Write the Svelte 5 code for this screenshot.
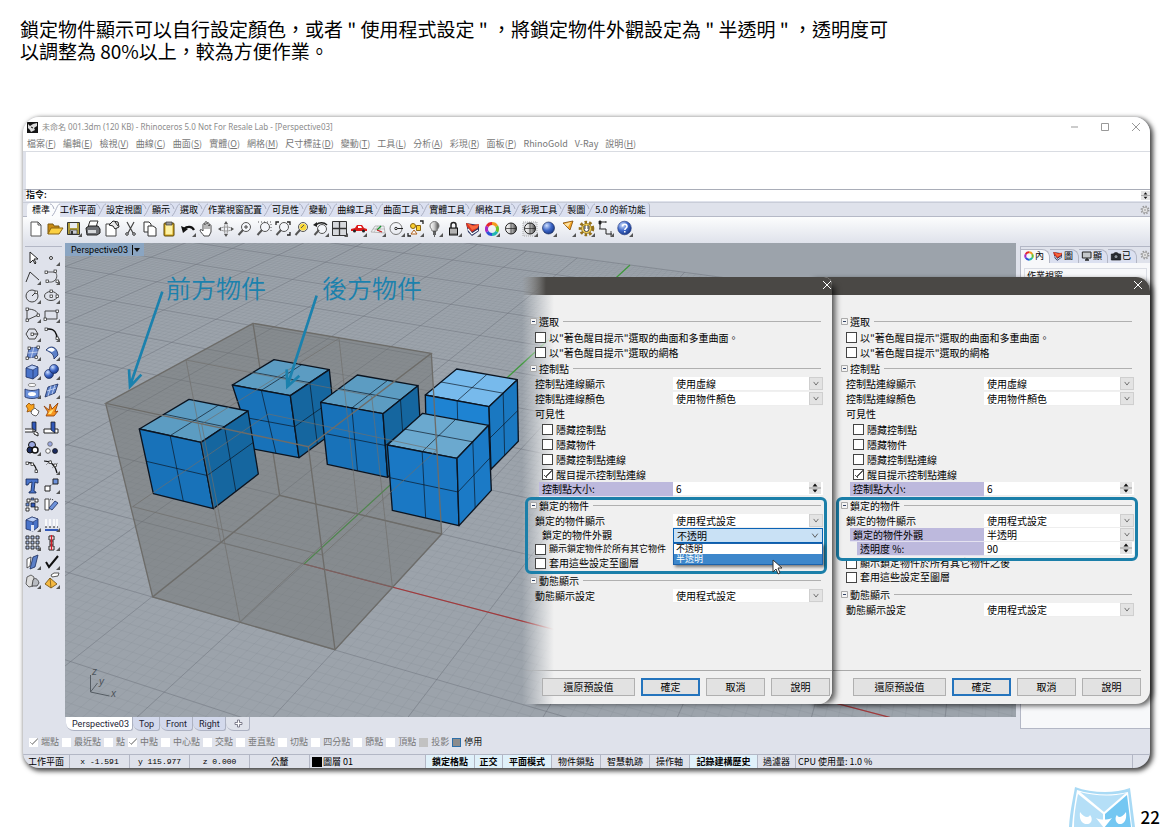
<script lang="ts">
    type Row = {
        kind: 'check' | 'select' | 'spin' | 'text';
        label: string;
        value?: string;
        indent?: number;
        checked?: boolean;
        tinted?: boolean;
        open?: boolean;
        cut?: boolean;
    };
    type Section = { title: string; mark?: string; rows: Row[] };

    const menus = [
        ['檔案', 'F'], ['編輯', 'E'], ['檢視', 'V'], ['曲線', 'C'], ['曲面', 'S'], ['實體', 'O'],
        ['網格', 'M'], ['尺寸標註', 'D'], ['變動', 'T'], ['工具', 'L'], ['分析', 'A'], ['彩現', 'R'],
        ['面板', 'P'], ['RhinoGold', ''], ['V-Ray', ''], ['說明', 'H']
    ];

    const tabs = [
        '標準', '工作平面', '設定視圖', '顯示', '選取', '作業視窗配置', '可見性', '變動', '曲線工具',
        '曲面工具', '實體工具', '網格工具', '彩現工具', '製圖', '5.0 的新功能'
    ];

    const fly = '<path d="M17 13v4h-4z" fill="#555"/>';
    const node = (x: number, y: number) =>
        `<rect x="${x - 1}" y="${y - 1}" width="2.500" height="2.500" fill="#fff" stroke="#222" stroke-width=".7"/>`;
    const lens = '<circle cx="10" cy="7" r="4.500" fill="#f4f6fa" stroke="#555"/><path d="M7 10l-4.500 5" stroke="#555" stroke-width="2"/>';
    const ring =
        '<g fill="none" stroke-width="3"><path d="M9 3.500a5.500 5.500 0 0 1 4.800 2.700" stroke="#f39a1d"/><path d="M13.800 6.200a5.500 5.500 0 0 1 0 5.500" stroke="#6cc22c"/><path d="M13.800 11.700A5.500 5.500 0 0 1 9 14.500" stroke="#21b6b0"/><path d="M9 14.500a5.500 5.500 0 0 1-4.800-2.800" stroke="#2c50d8"/><path d="M4.200 11.700a5.500 5.500 0 0 1 0-5.500" stroke="#a52bc4"/><path d="M4.200 6.200A5.500 5.500 0 0 1 9 3.500" stroke="#e4262c"/></g>';
    const wedge =
        '<path d="M2 3l2 9 4 4 7-5V5z" fill="#27325e"/><path d="M2 3l7 2 6-1-1 4-6 4-5-5z" fill="#dd3420"/><path d="M3 3l6 3 6-1-2 3-5 2z" fill="#f7693f"/><path d="M4 9l4 5 6-4" stroke="#fff" stroke-width="1.300" fill="none"/>';
    const sphere = '<circle cx="9" cy="8.500" r="5.500" fill="url(#grayBall)" stroke="#222"/><path d="M9 3v11M3.500 8.500h11" stroke="#222" stroke-width=".7"/>';

    const toolbar: [string, string][] = [
        ['新增', '<path d="M4 2h7l3 3v11H4z" fill="#fff" stroke="#555"/><path d="M11 2v3h3" fill="none" stroke="#555"/>'],
        ['開啟', '<path d="M2 14V4h5l1 2h5v3" fill="#c98b12" stroke="#7d5a10"/><path d="M2 14l3-6h12l-4 6z" fill="#fbd042" stroke="#8b6512"/>'],
        ['儲存', '<path d="M2.500 2.500h12v12h-12z" fill="#b09d3a" stroke="#333"/><path d="M5 3h7v5H5z" fill="#e9ebf0"/><path d="M5 10h7v4H5z" fill="#c9ccd4" stroke="#333" stroke-width=".6"/><path d="M6 11h2v3H6z" fill="#333"/>' + fly],
        ['列印', '<path d="M6 1h8l-2 6H4z" fill="#fff" stroke="#333"/><path d="M2 8l3-2h9l2 3v4l-3 2H3z" fill="#6d6f74" stroke="#222"/><path d="M4 10h8v3H4z" fill="#d6d8db"/>'],
        ['文件屬性', '<path d="M3 4h10v12H3z" fill="#fff" stroke="#444"/><path d="M10 1l5 1 1 5-4 2-2-3-4-1z" fill="#e8e8e8" stroke="#222"/><path d="M12 2l3 4" stroke="#222"/>'],
        ['剪下', '<path d="M5 2l6 11M12 2L6 13" stroke="#444" stroke-width="1.200"/><circle cx="5" cy="14" r="1.300" fill="none" stroke="#333"/><circle cx="12" cy="14" r="1.300" fill="none" stroke="#333"/>'],
        ['複製', '<path d="M3 2h5l2 2v8H3z" fill="#fff" stroke="#333"/><path d="M7 6h5l3 2v8H7z" fill="#fff" stroke="#333"/>'],
        ['貼上', '<rect x="4" y="3" width="10" height="13" rx="1" fill="#d3a416" stroke="#5b480c"/><path d="M5.500 5h7v9.500h-7z" fill="#fdf2a6"/><path d="M6 2h6v3H6z" fill="#999" stroke="#333" stroke-width=".7"/>'],
        ['復原', '<path d="M5 9c3-3 8-3 10 1" stroke="#111" stroke-width="2.200" fill="none"/><path d="M2 6l2 7 5-4z" fill="#111"/>' + fly],
        ['平移', '<path d="M6 16c-1-2-4-4-4-6 1-1 2 0 3 1V5c0-2 2-2 2 0V3c0-2 2-2 2 0v1c0-2 2-2 2 0v2c0-2 2-2 2 0v6l-2 4z" fill="#fff" stroke="#333" stroke-width=".9"/><path d="M7 5v4M9 4v5M11 5v4" stroke="#333" stroke-width=".7"/>'],
        ['旋轉檢視', '<ellipse cx="9" cy="9" rx="6" ry="2" fill="none" stroke="#999"/><ellipse cx="9" cy="9" rx="1.600" ry="6" fill="none" stroke="#999"/><path d="M4 7v4L1 9zM14 7v4l3-2zM7 4h4L9 1zM7 14h4l-2 3z" fill="#555"/>'],
        ['動態縮放', lens + '<path d="M8 7h4M10 5v4" stroke="#444"/>'],
        ['框選縮放', lens + '<path d="M3 2h13v11" fill="none" stroke="#555" stroke-dasharray="1 2"/>'],
        ['縮放至範圍', lens + '<path d="M2 5V2h3M13 2h3v3M16 12v3h-3" fill="none" stroke="#222" stroke-width="1.300"/>'],
        ['縮放至選取', lens + '<circle cx="10" cy="7" r="3.500" fill="#f9d838"/><path d="M8 8l3-3" stroke="#555"/>'],
        ['復原檢視', lens.replace('cy="7"', 'cy="9"') + '<path d="M4 5c3-3 8-3 11 0" fill="none" stroke="#222" stroke-width="1.500"/><path d="M1 5l4-3v5z" fill="#222"/>' + fly],
        ['四個作業視窗', '<path d="M1.500 1.500h14v14h-14z" fill="#d6d8dc" stroke="#333"/><path d="M8.500 1.500v14M1.500 8.500h14" stroke="#333" stroke-width="1.300"/>' + fly],
        ['正確比例', '<path d="M1 9l4-1 2-3h5l2 3 3 1v2H1z" fill="#dc1a1a"/><path d="M8 6h3l1 2H8z" fill="#fff"/><circle cx="4.500" cy="11" r="1.500" fill="#222"/><circle cx="13.500" cy="11" r="1.500" fill="#222"/>' + fly],
        ['工作平面', '<path d="M2 12l4-6h9l1 7z" fill="#eef0f2" stroke="#aaa" stroke-width=".8"/><path d="M4 9h12M5 12l4-6M10 13l2-7" stroke="#aaa" stroke-width=".6"/><path d="M8 10l4-4" stroke="#14962f" stroke-width="1.300"/><path d="M8 10l5 2" stroke="#c92020" stroke-width="1.300"/>' + fly],
        ['物件鎖點', '<circle cx="8" cy="8.500" r="6" fill="none" stroke="#777"/><path d="M8 8.500h7" stroke="#222"/><circle cx="8" cy="8.500" r="1.200" fill="#fff" stroke="#222"/>' + fly],
        ['選取', '<circle cx="6" cy="6" r="2.500" fill="#fbd030" stroke="#8b6512"/><path d="M9.500 5.500h4v5h-4z" fill="#fbd030" stroke="#8b6512"/><path d="M7 10l3 4H4z" fill="#fff" stroke="#b0611a"/><path d="M13 1h3v3M1 13v3h3" fill="none" stroke="#222" stroke-width="1.300"/>' + fly],
        ['隱藏', '<path d="M6 11c0-2-2-3-2-5a4 4 0 0 1 9 0c0 2-2 3-2 5z" fill="url(#grayBall)" stroke="#777"/><path d="M7 12h3M7 14h3M8 16h1" stroke="#333" stroke-width="1.300"/>' + fly],
        ['鎖定', '<path d="M6 8V5a2.500 2.500 0 0 1 5 0v3" fill="none" stroke="#222" stroke-width="1.500"/><rect x="4.500" y="8" width="8" height="7" fill="#888" stroke="#111"/><path d="M5 10h7M5 12h7" stroke="#ddd"/>' + fly],
        ['圖層', wedge + fly],
        ['物件屬性', ring + fly],
        ['著色', sphere],
        ['彩現著色', '<path d="M2 2h14v14H2z" fill="#dfe1e5" stroke="#aaa" stroke-dasharray="1 1"/>' + sphere + fly],
        ['彩現', '<circle cx="8.500" cy="8" r="6" fill="url(#blueBall)" stroke="#0a1d4d" stroke-width=".6"/>' + fly],
        ['聚光燈', '<path d="M4 3l10-2-3 9z" fill="#f5a524" stroke="#7d4a08" stroke-width=".8"/><path d="M5 4l7-2-3 5z" fill="#fde3a4"/>' + fly],
        ['選項', '<circle cx="8.500" cy="8.500" r="6.300" fill="none" stroke="#94701b" stroke-width="3" stroke-dasharray="2.500 2"/><circle cx="8.500" cy="8.500" r="5" fill="#f3cf58" stroke="#7c6316" stroke-width=".7"/><path d="M6 6v3a2.500 2.500 0 0 0 5 0V6M7 5v4M10 5v4" fill="#fff" stroke="#444"/>' + fly],
        ['尺寸標註', '<path d="M3 2v7M3 2h6M4 9h5v5h6" fill="none" stroke="#222"/><path d="M2 1h2v3H2zM9 1v2M3 8v2M14 11v5" fill="#222" stroke="#222" stroke-width=".8"/>' + fly],
        ['說明', '<circle cx="8.500" cy="8" r="6.800" fill="url(#blueBall)" stroke="#20357c" stroke-width=".6"/><path d="M6.500 6.500c0-3 4.500-3 4.500 0 0 1.700-2.200 1.700-2.200 3.500M8.800 11v1.500" fill="none" stroke="#fff" stroke-width="1.500"/>' + fly]
    ];

    const cube = '<path d="M2 5l6-3 6 2v8l-5 4-7-2z" fill="#4a74c9" stroke="#1b2c5e" stroke-width=".8"/><path d="M2 5l6-3 6 2-5 3z" fill="#b9cff8" stroke="#1b2c5e" stroke-width=".6"/><path d="M9 7v9" stroke="#1b2c5e" stroke-width=".7"/>';

    const palette: [string, string][] = [
        ['選取物件', '<path d="M6 3v11l3-3 2 4 1-1-2-4h4z" fill="#fff" stroke="#222"/>'],
        ['點', '<circle cx="8" cy="9" r="1.500" fill="#fff" stroke="#333"/>' + fly],
        ['多重直線', '<path d="M2 14l4-10 9 8" fill="none" stroke="#333"/>' + fly],
        ['控制點曲線', '<path d="M3 4h9c3 3 2 7-1 9-3 2-7 1-7-1" fill="none" stroke="#333" stroke-width=".8"/>' + node(3, 4) + node(12, 3) + node(4, 13) + node(14, 13) + fly],
        ['圓', '<circle cx="8" cy="9" r="6" fill="none" stroke="#444"/><path d="M8 9l4-4" stroke="#333"/>' + node(12, 5) + fly],
        ['橢圓', '<ellipse cx="8" cy="9" rx="6.500" ry="4.500" fill="none" stroke="#444"/>' + node(8, 9) + node(8, 4) + node(14, 9) + fly],
        ['圓弧', '<path d="M14 9L3 14V3c6 0 11 2 11 6z" fill="none" stroke="#444"/>' + node(3, 3) + node(3, 14) + node(14, 9) + fly],
        ['矩形', '<path d="M2 5h12v8H2z" fill="none" stroke="#444"/>' + node(2, 13) + node(14, 5) + fly],
        ['多邊形', '<path d="M5 4h6l3 5-3 5H5L2 9z" fill="none" stroke="#444"/><path d="M8 9h6" stroke="#333"/>' + node(8, 9) + fly],
        ['曲線圓角', '<path d="M2 4h4c5 0 8 4 8 10" fill="none" stroke="#111" stroke-width="1.600"/>' + node(3, 4) + node(14, 13) + fly],
        ['曲面', '<path d="M5 4l10-1-3 10-9 1z" fill="#6a8bd0" stroke="#1b2c5e" stroke-width=".7"/><path d="M10 3l-3 11M4 9l10-1" stroke="#dfe7f9" stroke-width=".7"/>' + node(5, 4) + node(14, 3) + node(3, 14) + node(12, 13) + fly],
        ['邊緣曲面', '<path d="M3 6c4-5 11-4 12 5l-4 4c0-5-4-7-8-9z" fill="#5c80c8" stroke="#1b2c5e" stroke-width=".8"/><path d="M4 6c3-3 6-3 8 0l-3 2z" fill="#fff"/>' + fly],
        ['立方體', cube + fly],
        ['球體', '<circle cx="6" cy="11" r="4.500" fill="url(#blueBall)" stroke="#1b2c5e" stroke-width=".7"/><circle cx="11" cy="6" r="4.500" fill="url(#blueBall)" stroke="#1b2c5e" stroke-width=".7"/>' + fly],
        ['投影曲線', '<ellipse cx="8" cy="3" rx="4" ry="1.600" fill="#fff" stroke="#777" stroke-width=".8"/><path d="M1 7c4 2 10 2 14 0v8c-4 2-10 2-14 0z" fill="#6d92db" stroke="#1b2c5e" stroke-width=".8"/><ellipse cx="8" cy="12" rx="4" ry="2" fill="#fff"/>' + fly],
        ['網格', '<path d="M5 5l10-3-3 9-10 4z" fill="#5c80c8" stroke="#1b2c5e" stroke-width=".8"/><path d="M8 4L5 14M12 3L9 12M4 9l9-3" stroke="#cfdcf8" stroke-width=".8"/>' + fly],
        ['組合', '<path d="M2 5l3-3 2 2 3-1v4l2 2-3 3-3-2-3 1 1-3z" fill="#f7a31f" stroke="#8b4b08" stroke-width=".8"/><path d="M8 9l3-2 2 2 2 1-1 3-2 2-3-1-2-2z" fill="#fff" stroke="#666"/>'],
        ['炸開', '<path d="M1 5l5 4 1-6 2 5 6-6-3 9 3-1-4 5H3l2-4z" fill="#f7941f" stroke="#8b3b08" stroke-width=".8"/><path d="M5 13l2-3 4-2-3 5z" fill="#ffe477"/>'],
        ['修剪', '<path d="M1 9h8v3H1" fill="#fff" stroke="#222"/><path d="M8 2h4v9l-4-3z" fill="#3158b8" stroke="#111" stroke-width=".7"/><path d="M10 11l4 2v3l-4-2z" fill="#fff" stroke="#222"/>'],
        ['分割', '<path d="M1 9h14v4H1z" fill="#fff" stroke="#222"/><path d="M8 2h4v11l-4-3z" fill="#3158b8" stroke="#111" stroke-width=".7"/>'],
        ['群組', '<circle cx="8" cy="6" r="3.500" fill="#9aa8e0" stroke="#111"/><circle cx="6" cy="11" r="3" fill="#1c2c60" stroke="#111"/><circle cx="11" cy="11" r="3" fill="#fff" stroke="#111" stroke-width="1.500"/>' + fly],
        ['解散群組', '<circle cx="7" cy="5" r="2.300" fill="#9aa8e0" stroke="#555" stroke-width=".7"/><circle cx="5" cy="12" r="2.300" fill="#fff" stroke="#333" stroke-width=".7"/><circle cx="12" cy="12" r="2.500" fill="#1c2c60" stroke="#111" stroke-width=".7"/>'],
        ['編輯點', '<path d="M2 5c7-2 10 3 11 10" fill="none" stroke="#111" stroke-width="1.200"/>' + node(3, 5) + node(8, 6) + node(12, 13)],
        ['控制點', '<path d="M1 3c6 0 11 3 13 12" fill="none" stroke="#111" stroke-width="1.200"/><path d="M3 7l5-5M9 10l6-5" stroke="#777" stroke-width=".7"/>' + node(7, 4) + node(12, 7) + fly],
        ['文字', '<path d="M2 2h12v4h-1l-2-1-1 9 2 1v1H5v-1l2-1 1-9-3 1-1 2H2z" fill="#4a74c9" stroke="#12234f" stroke-width=".8"/>'],
        ['移動', '<path d="M2 9h5v5H2z" fill="#fff" stroke="#222"/><path d="M10 2h5v5h-5z" fill="#6d92db" stroke="#222"/><path d="M7 9l3-2" stroke="#222" stroke-dasharray="1 1"/>' + fly],
        ['複製物件', '<path d="M3 3h3v3H3zM11 3h3v3h-3zM2 12h3v3H2zM11 11h3v3h-3z" fill="#fff" stroke="#222" stroke-width=".9"/><path d="M7 7h4v4H7z" fill="#3158b8" stroke="#111" stroke-width=".7"/><path d="M2 7h3v3H2zM7 2h3v2H7z" fill="#6d92db" stroke="#222" stroke-width=".7"/>'],
        ['旋轉', '<path d="M2 3h4v11H2z" fill="#fff" stroke="#333" stroke-width=".9"/><path d="M12 5l3 2-6 7-3-2z" fill="#6d92db" stroke="#1b2c5e" stroke-width=".8"/><path d="M7 3l4 1" stroke="#222" stroke-dasharray="1 1"/>'],
        ['布林運算', cube + '<path d="M7 10h3v6H7z" fill="#dfe5f5"/>' + fly],
        ['對齊', '<path d="M2 15h13" stroke="#3158b8" stroke-width="2"/><path d="M3 4v8M7 4v8M11 4v8M14 4v8" stroke="#fff" stroke-width="1.500"/><path d="M2 12h13" stroke="#222" stroke-dasharray="2 2"/>' + fly],
        ['陣列', '<path d="M2 2h3v3H2zM7 2h3v3H7zM12 2h3v3h-3zM2 7h3v3H2zM7 7h3v3H7zM12 7h3v3h-3zM2 12h3v3H2zM7 12h3v3H7zM12 12h3v3h-3z" fill="#b3c5ec" stroke="#222" stroke-width=".9"/>' + fly],
        ['鏡射', '<path d="M6 2h5v4H6zM6 12h5v4H6zM7 7h3v4H7z" fill="#fff" stroke="#222"/><path d="M8.500 1v15" stroke="#d51e28" stroke-width="1.500"/>' + fly],
        ['彎曲', '<path d="M3 6l4-2-1 9-3 2z" fill="#fff" stroke="#333" stroke-width=".8"/><path d="M9 4l5-2-3 12-5 2z" fill="#5c80c8" stroke="#1b2c5e" stroke-width=".8"/>' + fly],
        ['檢查', '<path d="M3 9l3 5 9-11" fill="none" stroke="#111" stroke-width="2"/>' + fly],
        ['實體倒角', '<path d="M2 12l1-7 4-2 3 2-1 9-4 1z" fill="#ddd" stroke="#444" stroke-width=".8"/><path d="M8 14l1-6c2-3 5-1 6 3l-2 3z" fill="#b9bcc2" stroke="#333" stroke-width=".8"/>' + fly],
        ['操作軸', '<path d="M2 12l5-6 7 6-6 4z" fill="#f5b942" stroke="#6b4a0c" stroke-width=".8"/><path d="M7 6l1 10" stroke="#6b4a0c" stroke-width=".7"/><path d="M8 3l3-2h5l-1 3-6 1z" fill="#fff" stroke="#333" stroke-width=".8"/>' + fly]
    ];

    const monitor = '<path d="M2 3h13v9H2z" fill="#c5c8cc" stroke="#222" stroke-width="1.500"/><path d="M6 15h6M9 12v3" stroke="#222" stroke-width="2"/>';
    const camera = '<path d="M2 6h3l2-2h4l2 2h3v9H2z" fill="#2b2f36" stroke="#111"/><circle cx="9" cy="10" r="3" fill="#8c939c" stroke="#111"/>';
    const gear = '<circle cx="9" cy="9" r="6.500" fill="none" stroke="#999" stroke-width="3" stroke-dasharray="2.500 2.600"/><circle cx="9" cy="9" r="5" fill="#f4f4f4" stroke="#8e8e8e" stroke-width="1.300"/><circle cx="9" cy="9" r="1.800" fill="#fff" stroke="#8e8e8e" stroke-width="1.300"/>';
    const panelTabs = [['內', ring], ['圖', wedge], ['顯', monitor], ['已', camera]];

    const osnaps = ['端點', '最近點', '點', '中點', '中心點', '交點', '垂直點', '切點', '四分點', '節點', '頂點', '投影', '停用'];
    const osnapOn = ['端點', '中點'];

    const modes = [
        { text: '鎖定格點', on: true, w: 49 },
        { text: '正交', on: true, w: 28 },
        { text: '平面模式', on: true, w: 49 },
        { text: '物件鎖點', on: false, w: 49 },
        { text: '智慧軌跡', on: false, w: 49 },
        { text: '操作軸', on: false, w: 40 },
        { text: '記錄建構歷史', on: true, w: 68 },
        { text: '過濾器', on: false, w: 38 }
    ];

    const common: Section[] = [
        {
            title: '選取',
            rows: [
                { kind: 'check', label: '以"著色醒目提示"選取的曲面和多重曲面。' },
                { kind: 'check', label: '以"著色醒目提示"選取的網格' }
            ]
        },
        {
            title: '控制點',
            rows: [
                { kind: 'select', label: '控制點連線顯示', value: '使用虛線' },
                { kind: 'select', label: '控制點連線顏色', value: '使用物件顏色' },
                { kind: 'text', label: '可見性' },
                { kind: 'check', label: '隱藏控制點', indent: 1 },
                { kind: 'check', label: '隱藏物件', indent: 1 },
                { kind: 'check', label: '隱藏控制點連線', indent: 1 },
                { kind: 'check', label: '醒目提示控制點連線', indent: 1, checked: true },
                { kind: 'spin', label: '控制點大小:', value: '6', indent: 1, tinted: true }
            ]
        }
    ];
    const dynamic: Section = {
        title: '動態顯示',
        rows: [{ kind: 'select', label: '動態顯示設定', value: '使用程式設定' }]
    };

    const dialogs: Section[][] = [
        [
            ...common,
            {
                title: '鎖定的物件',
                mark: 'whole',
                rows: [
                    { kind: 'select', label: '鎖定的物件顯示', value: '使用程式設定' },
                    { kind: 'select', label: '鎖定的物件外觀', value: '不透明', indent: 1, open: true },
                    { kind: 'check', label: '顯示鎖定物件於所有其它物件', cut: true },
                    { kind: 'check', label: '套用這些設定至圖層' }
                ]
            },
            dynamic
        ],
        [
            ...common,
            {
                title: '鎖定的物件',
                mark: 'upper',
                rows: [
                    { kind: 'select', label: '鎖定的物件顯示', value: '使用程式設定' },
                    { kind: 'select', label: '鎖定的物件外觀', value: '半透明', indent: 1, tinted: true },
                    { kind: 'spin', label: '透明度 %:', value: '90', indent: 2, tinted: true },
                    { kind: 'check', label: '顯示鎖定物件於所有其它物件之後' },
                    { kind: 'check', label: '套用這些設定至圖層' }
                ]
            },
            dynamic
        ]
    ];

    // construction plane -> screen
    function project(x: number, y: number) {
        const w = 1 - 0.032 * x + 0.08 * y;
        return `${((76.4 * x + 83 * y + 304) / w).toFixed(1)} ${((4.5 * x - 8.7 * y + 564) / w).toFixed(1)}`;
    }

    function gridPath(step: number) {
        let d = '';
        const n = Math.round(10 / step);
        for (let i = -n; i <= n; i++) {
            const k = i * step;
            // stay in front of the camera
            const yMin = Math.max(-10, (0.15 - 1 + 0.032 * k) / 0.08);
            const xMax = Math.min(10, (0.85 + 0.08 * k) / 0.032);
            d += `M${project(k, yMin)}L${project(k, 10)}`;
            if (xMax > -10) d += `M${project(-10, k)}L${project(xMax, k)}`;
        }
        return d;
    }

    const minorGrid = gridPath(0.1);
    const majorGrid = gridPath(1);

    // top face (left, back, right, front), then bottom left, front, right
    const cubes = [
        { tint: 'free', p: [[1006, 405], [1100, 327], [1282, 359], [1197, 440], [1010, 590], [1203, 628], [1285, 544]] },
        { tint: 'veiled', p: [[427, 375], [552, 299], [718, 329], [601, 407], [489, 567], [627, 593], [737, 512]] },
        { tint: 'veiled', p: [[692, 427], [802, 345], [984, 377], [879, 461], [712, 613], [893, 652], [995, 560]] },
        { tint: 'veiled', p: [[148, 507], [297, 418], [474, 453], [333, 547], [190, 701], [370, 746], [505, 642]] },
        { tint: 'partly', p: [[892, 555], [998, 460], [1196, 496], [1101, 595], [907, 751], [1107, 797], [1204, 691]] }
    ];

    const poly = (...pts: number[][]) => pts.map((p) => p.join(',')).join(' ');
    const mid = (a: number[], b: number[]) => [(a[0] + b[0]) / 2, (a[1] + b[1]) / 2];
    const seg = (a: number[], b: number[]) => `M${a.join(' ')}L${b.join(' ')}`;

    function isoLines([a, b, c, d, e, f, g]: number[][]) {
        return (
            seg(mid(a, b), mid(d, c)) + seg(mid(b, c), mid(a, d)) +
            seg(mid(a, d), mid(e, f)) + seg(mid(d, c), mid(f, g)) +
            seg(mid(a, e), mid(d, f)) + seg(mid(d, f), mid(c, g))
        );
    }
</script>

<svg class="defs" aria-hidden="true">
    <defs>
        <linearGradient id="grayBall">
            <stop offset="0" stop-color="#fff" />
            <stop offset=".45" stop-color="#d0d0d0" />
            <stop offset="1" stop-color="#444" />
        </linearGradient>
        <radialGradient id="blueBall" cx=".35" cy=".3" r=".8">
            <stop offset="0" stop-color="#cfe0ff" />
            <stop offset=".5" stop-color="#3f68c8" />
            <stop offset="1" stop-color="#12307c" />
        </radialGradient>
    </defs>
</svg>

{#snippet icon(markup: string)}
    <svg class="icon" viewBox="0 0 18 18" fill="none">{@html markup}</svg>
{/snippet}

{#snippet chevron()}
    <svg class="chevron" viewBox="0 0 14 14"><path d="M4 5l3 4 3-4" fill="none" stroke="#555" /></svg>
{/snippet}

{#snippet updown()}
    <svg class="updown" viewBox="0 0 12 12">
        <path d="M0 0h12v12H0z" fill="#e4e4e4" />
        <path d="M0 6h12" stroke="#999" />
        <path d="M6 1.500l2.500 3h-5zM6 10.500l2.500-3h-5z" fill="#111" />
    </svg>
{/snippet}

{#snippet fieldRow(row: Row, id: string)}
    <div class="row">
        {#if row.kind === 'check'}
            <label class="check indent{row.indent ?? 0}" class:cut={row.cut}>
                <input type="checkbox" checked={row.checked} />{row.label}
            </label>
        {:else if row.kind === 'text'}
            <span class="caption indent0">{row.label}</span>
        {:else}
            <label for={id} class="caption indent{row.indent ?? 0}" class:tinted={row.tinted}>{row.label}</label>
            <div class="control" class:open={row.open}>
                {#if row.kind === 'select'}
                    <select {id}>
                        <option>{row.value}</option>
                    </select>
                    {@render chevron()}
                {:else}
                    <input {id} type="text" value={row.value} />
                    {@render updown()}
                {/if}
                {#if row.open}
                    <ul class="options">
                        <li>不透明</li>
                        <li class="hot">半透明</li>
                    </ul>
                    <svg class="pointer" viewBox="0 0 12 16">
                        <path d="M1 1v12l3-3 2 5 2-1-2-5h4z" fill="#fff" stroke="#333" />
                    </svg>
                {/if}
            </div>
        {/if}
    </div>
{/snippet}

<div class="page">
    <p class="intro">
        鎖定物件顯示可以自行設定顏色，或者 " 使用程式設定 " ，將鎖定物件外觀設定為 " 半透明 " ，透明度可<br />以調整為 80%以上，較為方便作業。
    </p>

    <div class="stage">
        <div class="window">
            <header class="titlebar">
                <svg class="logo" viewBox="0 0 11 11">
                    <path d="M0 0h11v11H0z" fill="#151515" />
                    <path d="M1 2l2 2 3-2 4-1v3l-3 2 1 2-4 2-1-2-2-2z" fill="#ddd" />
                    <path d="M4 5l2 1" stroke="#151515" />
                </svg>
                <span>未命名 001.3dm (120 KB) - Rhinoceros 5.0 Not For Resale Lab - [Perspective03]</span>
                <div class="winbuttons">
                    <button aria-label="最小化"><svg viewBox="0 0 10 10"><path d="M2 5h7" /></svg></button>
                    <button aria-label="最大化"><svg viewBox="0 0 10 10"><path d="M1.500 1.500h7v7h-7z" /></svg></button>
                    <button aria-label="關閉"><svg viewBox="0 0 10 10"><path d="M1 1l8 8M9 1L1 9" /></svg></button>
                </div>
            </header>

            <nav class="menubar">
                {#each menus as [name, key]}
                    <button>{name}{#if key}(<u>{key}</u>){/if}</button>
                {/each}
            </nav>

            <div class="history"></div>
            <div class="command">
                <label for="command">指令:</label>
                <input id="command" type="text" />
                {@render updown()}
            </div>

            <div class="tabs">
                {#each tabs as tab, i}
                    <button class="tab" class:active={i === 0}>
                        {tab}
                        {#if i < tabs.length - 1}
                            <svg viewBox="0 0 10 14"><path d="M0 1c2 0 3 2 4 5M10 1C7 1 6 9 2 13" /></svg>
                        {/if}
                    </button>
                {/each}
                <span class="cog">{@render icon(gear)}</span>
            </div>

            <div class="toolbar">
                {#each toolbar as [name, markup]}
                    <button class="tool" aria-label={name}>{@render icon(markup)}</button>
                {/each}
            </div>

            <div class="body">
                <aside class="palette">
                    {#each palette as [name, markup]}
                        <button class="tool" aria-label={name}>{@render icon(markup)}</button>
                    {/each}
                </aside>

                <main class="center">
                    <div class="viewport">
                        <svg class="scene" viewBox="65 243 951 474" preserveAspectRatio="xMinYMin slice">
                            <path d={minorGrid} class="minor" />
                            <path d={majorGrid} class="major" />
                            <path d="M{project(0, 0)}L{project(8, 0)}" stroke="#a3393b" stroke-width="1.200" />
                            <path d="M{project(0, 0)}L{project(0, 10)}" stroke="#3f9a3c" stroke-width="1.200" />

                            <g transform="translate(90 260) scale(.33333)">
                                <polygon points="47,430 489,190 1024,280 1055,822 735,1169 188,1011" fill="#696b68" fill-opacity=".42" />
                                <path class="edge" d="M489 190L569 706L188 1011M569 706L1055 822" />
                                {#each cubes as { tint, p }}
                                    <g class={tint} stroke="#0b1420" stroke-width="4" stroke-linejoin="round">
                                        <polygon class="top" points={poly(p[0], p[1], p[2], p[3])} />
                                        <polygon class="left" points={poly(p[0], p[3], p[5], p[4])} />
                                        <polygon class="right" points={poly(p[3], p[2], p[6], p[5])} />
                                        <path d={isoLines(p)} stroke-width="2" fill="none" />
                                    </g>
                                {/each}
                                <path
                                    class="iso"
                                    d="M288 300L845 408M747 235L335 492M288 300L393 848L907 980L845 408M747 235L803 755L450 1085L335 492M128 740L697 885L1040 570L535 462Z"
                                />
                                <path class="edge" d="M47 430L489 190L1024 280L655 560ZM47 430L188 1011L735 1169L1055 822L1024 280M655 560L735 1169" />
                                <g fill="none" stroke="#1b81ad" stroke-width="8">
                                    <path d="M217 95L120 378M117 328L120 380L154 344" />
                                    <path d="M680 107L592 378M590 328L592 380L628 347" />
                                </g>
                            </g>

                            <text x="166" y="298" class="note">前方物件</text>
                            <text x="322" y="298" class="note">後方物件</text>

                            <path d="M90.500 675v17l19 4M90.500 692l7-9" fill="none" stroke="#555c63" />
                            <text x="92" y="675" class="axis">z</text>
                            <text x="99" y="685" class="axis">y</text>
                            <text x="111" y="697" class="axis">x</text>
                        </svg>
                        <div class="viewtitle">
                            <span>Perspective03</span>
                            <svg viewBox="0 0 8 10"><path d="M.5 0v10" stroke="#111" /><path d="M2 3h6L5 7z" fill="#111" /></svg>
                        </div>
                    </div>

                    <div class="viewtabs">
                        <button class="active">Perspective03</button>
                        <button>Top</button>
                        <button>Front</button>
                        <button>Right</button>
                        <button class="plus" aria-label="新增作業視窗">
                            <svg viewBox="0 0 9 9"><path d="M3.500 1h2v2.500H8v2H5.500V8h-2V5.500H1v-2h2.500z" fill="#fff" stroke="#667" stroke-width=".8" /></svg>
                        </button>
                    </div>
                </main>

                <aside class="panel">
                    <div class="paneltabs">
                        {#each panelTabs as [name, markup], i}
                            <button class:active={i === 0}>{@render icon(markup)}{name}</button>
                        {/each}
                        {@render icon(gear)}
                    </div>
                    <div class="panelbody">
                        <div class="paneltitle">作業視窗</div>
                    </div>
                </aside>
            </div>

            <div class="osnap">
                {#each osnaps as name}
                    <label class:last={name === '停用'}>
                        <input type="checkbox" checked={osnapOn.includes(name)} class:grayed={name === '投影'} class:filled={name === '停用'} />{name}
                    </label>
                {/each}
            </div>

            <footer class="status">
                <span class="cell plane">工作平面</span>
                <span class="cell num">x -1.591</span>
                <span class="cell num">y 115.977</span>
                <span class="cell num">z 0.000</span>
                <span class="cell unit">公釐</span>
                <span class="cell layer"><i></i>圖層 01</span>
                {#each modes as m}
                    <button class="cell" class:on={m.on} style="width: {m.w}px">{m.text}</button>
                {/each}
                <span class="cell cpu">CPU 使用量: 1.0 %</span>
                <span class="grip"></span>
            </footer>
        </div>

        <div class="dialogs">
            {#each dialogs as sections, d}
                <section class="dialog" class:faded={d === 0} class:behind={d === 1}>
                    <header>
                        <button aria-label="關閉"><svg viewBox="0 0 10 10"><path d="M1 1l8 8M9 1L1 9" /></svg></button>
                    </header>
                    <div class="fields">
                        {#each sections as section, s}
                            <div class="group {section.mark ? 'marked ' + section.mark : ''}">
                                <h3>
                                    <svg viewBox="0 0 7 7"><path d="M.5.5h6v6h-6z" fill="#f4f4f4" stroke="#aaa" /><path d="M2 3.500h3" stroke="#346" /></svg>
                                    {section.title}
                                </h3>
                                {#each section.rows as row, r}
                                    {@render fieldRow(row, `f${d}-${s}-${r}`)}
                                {/each}
                            </div>
                        {/each}
                    </div>
                    <div class="actions">
                        <button class="wide">還原預設值</button>
                        <button class="primary">確定</button>
                        <button>取消</button>
                        <button>說明</button>
                    </div>
                </section>
            {/each}
        </div>
    </div>

    <div class="pagefoot">
        <svg class="owl" viewBox="0 0 66 40">
            <path d="M6 0c16 6 39 7 55 1l5 39H0C1 24 4 12 6 0z" fill="#a9daf5" />
            <path d="M8 3c15 5 36 6 51 2l4 35H3C4 26 6 14 8 3z" fill="#fff" />
            <path d="M9 7l25 20v13H5C5 27 7 17 9 7z" fill="#b5dff7" />
            <path d="M11 5c14 4 32 5 46 1L35 25z" fill="#b5dff7" />
            <path d="M58 8l4 32H36V27z" fill="#74c7f2" />
            <path d="M11 25c-1 8 2 12 7 12s6-6 3-9c-1 3-6 3-10-3zM57 25c1 8-2 12-6 12s-6-6-3-9c1 3 5 3 9-3zM27 31c5 2 11 2 16 0l-8 10z" fill="#fff" />
        </svg>
        <span>22</span>
    </div>
</div>

<style>
    :global(body) {
        background: #fff;
    }

    * {
        box-sizing: border-box;
    }

    .defs {
        position: absolute;
        width: 0;
        height: 0;
    }

    button,
    input,
    select {
        font: inherit;
        color: inherit;
        margin: 0;
        padding: 0;
        border: 0;
        background: none;
        appearance: none;
        outline: 0;
        border-radius: 0;
    }

    .page {
        display: flex;
        flex-direction: column;
        min-height: 100vh;
        padding: 18px 0 0;
        color: #000;
        font-family: "Noto Sans CJK TC", sans-serif;
        font-size: 9px;
        line-height: 12px;
    }

    .intro {
        margin: 0 20px 55px;
        font-size: 19px;
        line-height: 22px;
    }

    .stage {
        position: relative;
        flex: 1;
        display: flex;
        margin: 0 20px 19px 23px;
    }

    .window {
        flex: 1;
        min-width: 0;
        display: flex;
        flex-direction: column;
        overflow: hidden;
        border-radius: 16px;
        background: #dfe2eb;
        box-shadow: 2px 2px 5px 1px rgba(0, 0, 0, 0.75);
    }

    .titlebar {
        display: flex;
        align-items: center;
        height: 20px;
        padding: 0 9px 0 4px;
        background: #fff;
        color: #8c8c8c;
        font-family: "Noto Sans", "Noto Sans CJK TC", sans-serif;
        font-size: 8px;
    }

    .logo {
        width: 11px;
        height: 11px;
        margin-right: 4px;
    }

    .winbuttons {
        display: flex;
        gap: 21px;
        margin-left: auto;
    }

    .winbuttons button,
    .dialog header button {
        width: 10px;
        height: 10px;
    }

    .winbuttons svg,
    .dialog header svg {
        display: block;
        fill: none;
        stroke: #999;
    }

    .menubar {
        display: flex;
        gap: 7px;
        height: 15px;
        padding-left: 4px;
        background: #fff;
        border-bottom: 1px solid #d9dce2;
        color: #777;
        white-space: nowrap;
    }

    .history {
        height: 38px;
        border-left: 3px solid #dfe2eb;
        border-bottom: 1px solid #a9adb8;
        background: #fff;
    }

    .command {
        display: flex;
        height: 11px;
        border-left: 3px solid #dfe2eb;
        background: #fff;
        line-height: 10px;
    }

    .command label {
        margin-right: 4px;
        font-weight: 500;
    }

    .command input {
        flex: 1;
    }

    .command .updown {
        width: 9px;
        height: 11px;
    }

    .tabs {
        display: flex;
        height: 15px;
        margin-top: 1px;
        padding-left: 4px;
        border-top: 1px solid #c9cdd8;
        border-bottom: 1px solid #b5b9c6;
        white-space: nowrap;
    }

    .tab {
        display: flex;
        align-items: center;
        height: 14px;
        background: #dbe0f0;
    }

    .tab:first-child {
        padding-left: 5px;
        border-radius: 4px 0 0 0;
    }

    .tab:nth-last-child(2) {
        padding-right: 3px;
        border-right: 1px solid #a9aec0;
        border-radius: 0 3px 0 0;
    }

    .tab.active {
        background: #fbfcfd;
    }

    .tab svg {
        width: 10px;
        height: 14px;
        fill: none;
        stroke: #a9aec0;
    }

    .cog {
        width: 10px;
        height: 12px;
        margin-left: auto;
        padding-top: 2px;
    }

    .cog .icon {
        width: 10px;
        height: 10px;
    }

    .icon {
        display: block;
        width: 18px;
        height: 18px;
        flex: none;
    }

    .toolbar {
        display: flex;
        height: 26px;
        padding: 2px 0 0 4px;
        background: linear-gradient(#fcfdfd, #dfe2eb);
    }

    .tool {
        width: 19px;
        height: 19px;
        flex: none;
    }

    .body {
        flex: 1;
        display: flex;
        min-height: 0;
    }

    .palette {
        display: grid;
        grid-template-columns: 19px 19px;
        align-content: start;
        width: 42px;
        padding: 5px 0 0 1px;
    }

    .palette::before {
        content: "";
        grid-column: 1 / 3;
        height: 1px;
        margin: -2px 0 0 1px;
        background: #b3b7c5;
    }

    .center {
        flex: 1;
        min-width: 0;
        display: flex;
        flex-direction: column;
    }

    .viewport {
        position: relative;
        flex: 1;
        display: flex;
        min-height: 0;
        background: #9ca3ab;
    }

    .scene {
        width: 100%;
        height: 100%;
    }

    .minor,
    .major,
    .iso,
    .edge {
        fill: none;
    }

    .minor {
        stroke: #6d747c;
        stroke-width: 0.5;
        stroke-opacity: 0.24;
    }

    .major {
        stroke: #6c727a;
        stroke-width: 0.6;
        stroke-opacity: 0.7;
    }

    .edge {
        stroke: #6d6c69;
        stroke-width: 4;
    }

    .iso {
        stroke: #6f6e6b;
        stroke-width: 2;
    }

    .free .top { fill: #77baec; }
    .free .left { fill: #1e83d2; }
    .free .right { fill: #1a78c1; }
    .partly .top { fill: #6ba9cf; }
    .partly .left { fill: #1a78c4; }
    .partly .right { fill: #1b7ac6; }
    .veiled .top { fill: #5c9cc2; }
    .veiled .left { fill: #1872b9; }
    .veiled .right { fill: #15669f; }

    .note {
        fill: #1b81ad;
        font-size: 25px;
        font-weight: 350;
    }

    .axis {
        fill: #4d545b;
        font-family: "Liberation Sans", sans-serif;
        font-size: 10px;
        font-style: italic;
    }

    .viewtitle {
        position: absolute;
        top: 0;
        left: 0;
        display: flex;
        align-items: center;
        gap: 4px;
        height: 13px;
        padding: 0 4px 0 6px;
        background: #8aa5c2;
        font-family: Roboto, sans-serif;
    }

    .viewtitle svg {
        width: 8px;
        height: 10px;
    }

    .viewtabs {
        display: flex;
        height: 16px;
        padding-left: 1px;
        color: #223;
        font-family: Roboto, sans-serif;
    }

    .viewtabs button {
        height: 14px;
        padding: 0 5px 0 6px;
        border: solid #adb2c2;
        border-width: 0 1px 1px 0;
        border-radius: 0 0 3px 8px;
        background: #d3d9ec;
    }

    .viewtabs button.active {
        padding: 0 3px 0 6px;
        background: #fff;
    }

    .viewtabs button.plus {
        padding: 0 6px 0 8px;
        background: none;
    }

    .plus svg {
        display: block;
        width: 9px;
        height: 9px;
    }

    .panel {
        display: flex;
        flex-direction: column;
        width: 130px;
        margin: 3px 0 4px 4px;
        border-top: 1px solid #b3b7c5;
    }

    .paneltabs {
        display: flex;
        height: 16px;
        padding-top: 2px;
        border-left: 1px solid #b3b7c5;
    }

    .paneltabs button {
        display: flex;
        width: 29px;
        height: 14px;
        padding-left: 2px;
        border: solid #b3b7c5;
        border-width: 1px 1px 0 0;
        border-radius: 0 8px 0 0;
        background: #dbe0f0;
        line-height: 11px;
    }

    .paneltabs button.active {
        background: #f7f8fa;
    }

    .paneltabs .icon {
        width: 12px;
        height: 12px;
    }

    .paneltabs > .icon {
        width: 10px;
        margin-left: auto;
    }

    .panelbody {
        flex: 1;
        padding: 5px 3px;
        border: solid #b3b7c5;
        border-width: 0 0 1px 1px;
        background: #f7f8fa;
    }

    .paneltitle {
        padding: 1px 2px;
        border: 1px solid #dadde4;
        border-bottom: 0;
    }

    .osnap {
        display: flex;
        gap: 3px;
        height: 18px;
        margin-bottom: 3px;
        padding: 3px 0 0 6px;
        color: #777;
    }

    .osnap label {
        display: flex;
        align-items: center;
        gap: 3px;
        height: 12px;
        white-space: nowrap;
    }

    .osnap label.last {
        color: #111;
    }

    .osnap input,
    .check input {
        --tick: #555;
        width: 9px;
        height: 9px;
        flex: none;
        background: #fff no-repeat;
    }

    .osnap input {
        --tick: #aaa;
    }

    .osnap input:checked,
    .check input:checked {
        background-image: linear-gradient(45deg, transparent 34%, var(--tick) 34% 44%, transparent 44%), linear-gradient(-45deg, transparent 46%, var(--tick) 46% 56%, transparent 56%);
        background-size: 40% 60%, 65% 80%;
        background-position: 10% 80%, 100% 20%;
    }

    .osnap input.grayed {
        background: #c2c2c2;
    }

    .osnap input.filled {
        background: #8c8c8c;
        border: 1px solid #2d6fa8;
    }

    .status {
        display: flex;
        height: 14px;
        border-top: 1px solid #b3b7c5;
        line-height: 13px;
        white-space: nowrap;
    }

    .cell {
        flex: none;
        height: 13px;
        border-right: 1px solid #b3b7c5;
        text-align: center;
    }

    .cell.on {
        background: #e0f1fa;
        font-weight: 700;
    }

    .plane {
        width: 47px;
    }

    .num,
    .unit {
        width: 60px;
    }

    .num {
        font-family: "Liberation Mono", monospace;
        font-size: 8px;
    }

    .layer {
        display: flex;
        align-items: center;
        width: 116px;
        padding-left: 2px;
    }

    .layer i {
        width: 10px;
        height: 10px;
        margin-right: 1px;
        background: #000;
    }

    .cell.cpu {
        flex: 1;
        padding-left: 2px;
        text-align: left;
    }

    .grip {
        width: 17px;
    }

    .dialogs {
        position: absolute;
        top: 160px;
        right: 0;
        bottom: 64px;
        display: flex;
        font-size: 10px;
        line-height: 14px;
    }

    .dialog {
        position: relative;
        display: flex;
        flex-direction: column;
        width: 310px;
        border-radius: 0 8px 14px 0;
        background: #f0f0f0;
        box-shadow: 3px 2px 5px rgba(0, 0, 0, 0.6);
    }

    .dialog.faded {
        z-index: 1;
        background: linear-gradient(90deg, rgba(240, 240, 240, 0), #f0f0f0 32px);
        box-shadow: 8px 4px 6px -5px rgba(0, 0, 0, 0.7);
    }

    .dialog.behind {
        width: 339px;
        margin-left: -21px;
        padding-left: 22px;
        border-radius: 0 14px 14px 0;
    }

    .dialog header {
        display: flex;
        justify-content: flex-end;
        height: 18px;
        padding: 3px 0;
        background: #4a4845;
    }

    .faded header {
        border-radius: 0 8px 0 0;
        background: linear-gradient(90deg, rgba(74, 72, 69, 0), #4a4845 24px);
    }

    .behind header {
        margin-left: -22px;
        border-radius: 0 14px 0 0;
    }

    .behind header button {
        margin-right: 7px;
    }

    .dialog header svg {
        stroke: #fff;
    }

    .fields {
        width: 301px;
        padding-top: 18px;
    }

    .group {
        position: relative;
    }

    .group h3 {
        display: flex;
        align-items: center;
        height: 17px;
        margin: 0 2px 0 8px;
        font-size: 10px;
        font-weight: 400;
        line-height: 16px;
    }

    .group h3 svg {
        width: 7px;
        height: 7px;
        margin-right: 2px;
    }

    .group h3::after {
        content: "";
        flex: 1;
        height: 1px;
        margin-left: 4px;
        background: #b0b0b0;
    }

    .row {
        display: flex;
        height: 15px;
    }

    .marked {
        padding-bottom: 2px;
    }

    .marked .row {
        height: 14px;
    }

    .marked::after {
        content: "";
        position: absolute;
        top: 0;
        right: -4px;
        bottom: -2px;
        left: 3px;
        border: 3px solid #1b7fa9;
        border-radius: 6px;
        pointer-events: none;
    }

    .upper::after {
        bottom: 25px;
    }

    .caption {
        flex: 1;
        margin-left: 10px;
        padding-left: 3px;
        white-space: nowrap;
    }

    .caption.indent1 {
        margin-left: 17px;
    }

    .caption.indent2 {
        margin-left: 24px;
    }

    .tinted {
        background: #bdb9dd;
        border-bottom: 1px solid #e4e2f0;
    }

    .check {
        display: flex;
        align-items: center;
        gap: 3px;
        margin-left: 13px;
        white-space: nowrap;
    }

    .check.cut {
        width: 138px;
        font-size: 9px;
    }

    .check.indent1 {
        margin-left: 20px;
    }

    .check input {
        width: 11px;
        height: 11px;
        border: 1px solid #444;
    }

    .control {
        position: relative;
        display: flex;
        width: 150px;
        height: 14px;
        margin-bottom: 1px;
        background: #fff;
        border-bottom: 1px solid #eee;
    }

    .control select,
    .control input {
        flex: 1;
        min-width: 0;
        height: 13px;
        padding-left: 3px;
        line-height: 13px;
    }

    .chevron {
        width: 14px;
        height: 13px;
        background: #e3e3e3;
        border: 1px solid #cfcfcf;
    }

    .control .updown {
        width: 12px;
        height: 12px;
        margin-right: 2px;
    }

    .control.open {
        z-index: 1;
        height: 15px;
        border: 1px solid #0a62b5;
        background: #c9e1f5;
    }

    .open .chevron {
        background: none;
        border: 0;
    }

    .options {
        position: absolute;
        top: 14px;
        left: -1px;
        right: -1px;
        margin: 0;
        padding: 0;
        border: 1px solid #1c63ac;
        background: #fff;
        box-shadow: 2px 2px 3px rgba(0, 0, 0, 0.5);
        font-size: 9px;
        line-height: 10px;
        list-style: none;
    }

    .options li {
        height: 10px;
        padding-left: 2px;
    }

    .options .hot {
        background: #3d87cb;
        color: #fff;
    }

    .pointer {
        position: absolute;
        top: 30px;
        left: 98px;
        width: 12px;
        height: 16px;
    }

    .actions {
        display: flex;
        gap: 6px;
        margin-top: auto;
        padding: 7px 0 8px 20px;
        border-top: 1px solid #a9a9a9;
    }

    .behind .actions {
        margin-right: 9px;
    }

    .faded .actions {
        border-image: linear-gradient(90deg, transparent, #a9a9a9 30px) 1;
    }

    .actions button {
        width: 59px;
        height: 18px;
        border: 1px solid #b0b0b0;
        background: #e2e2e2;
    }

    .actions .wide {
        width: 93px;
    }

    .actions .primary {
        border: 2px solid #2474bd;
    }

    .pagefoot {
        display: flex;
        align-items: flex-end;
        justify-content: flex-end;
        gap: 6px;
        height: 40px;
        padding-right: 10px;
        font-size: 17px;
        font-weight: 500;
        line-height: 20px;
    }

    .owl {
        width: 66px;
        height: 40px;
    }
</style>
